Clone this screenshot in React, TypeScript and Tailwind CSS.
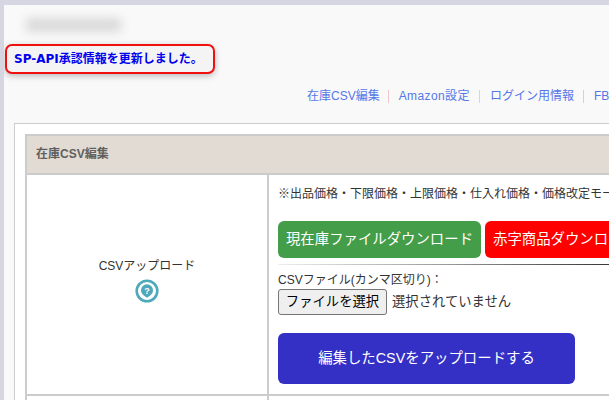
const sans = "font-['Liberation_Sans','Noto_Sans_CJK_JP',sans-serif]"

function HelpIcon() {
  return (
    <svg width="24" height="24" viewBox="0 0 24 24" className="mt-[4px]">
      <circle cx="12" cy="12" r="10.3" fill="#fff" stroke="#4fa9bb" strokeWidth="2.6" />
      <path d="M12 5.2a6 6 0 0 1 6 6c0 3.6-3 5.4-6 7.6-3-2.2-6-4-6-7.6a6 6 0 0 1 6-6z" fill="#4fa9bb" />
      <text x="12" y="14.5" textAnchor="middle" fontSize="9" fontWeight="700" fill="#fff" fontFamily="Liberation Sans">?</text>
    </svg>
  )
}

function Nav() {
  return (
    <div className="mt-[13px] flex h-[18px] items-center whitespace-nowrap pl-[303px] text-[12px] leading-[18px] text-[#5577e8]">
      <span>在庫CSV編集</span>
      <span className="ml-[8px] mr-[10px] h-[13px] w-px shrink-0 bg-[#f3c6cd]" />
      <span className="tracking-[0.4px]">Amazon設定</span>
      <span className="ml-[9px] mr-[10px] h-[13px] w-px shrink-0 bg-[#c6daf2]" />
      <span>ログイン用情報</span>
      <span className="ml-[9px] mr-[10px] h-[13px] w-px shrink-0 bg-[#c6d2ee]" />
      <span>FBA設定</span>
    </div>
  )
}

export default function App() {
  return (
    <div className={`h-[400px] w-[609px] overflow-hidden bg-[#d6d6e2] pl-1 pt-[5px] ${sans}`}>
      <div className="h-[395px] w-[605px] overflow-hidden bg-[#f9f9f9]">
        <div className="h-[39px] pl-[22px] pt-[13px]">
          <div className="h-[14px] w-[95px] bg-[#dadada] blur-[5px]" />
        </div>
        <div className="ml-px flex h-[30px] w-[210px] items-center whitespace-nowrap rounded-[7px] border-2 border-[#f01010] bg-[#f4f4f4] pl-[7px] font-['DejaVu_Sans','Noto_Sans_CJK_JP',sans-serif] text-[12px] font-bold text-[#0000ee] shadow-[0_2px_6px_rgba(0,0,0,0.25)]">
          SP-API承認情報を更新しました。
        </div>
        <Nav />
        <div className="ml-[10px] mt-[18px] h-[300px] w-[640px] border border-[#cccccc] bg-white pl-[10px] pt-[10px]">
          <div className="w-[620px] border-2 border-[#cccccc]">
            <div className="flex h-[39px] items-center border-b-2 border-[#cccccc] bg-[#e2dbd4] pb-[2px] pl-[9px] text-[12px] font-bold text-[#5f5f5f]">
              在庫CSV編集
            </div>
            <div className="flex border-b-2 border-[#cccccc]">
              <div className="flex h-[219px] w-[242px] shrink-0 flex-col items-center border-r-2 border-[#cccccc] pt-[82px] text-[12px] leading-[18px] text-[#333333]">
                <span>CSVアップロード</span>
                <HelpIcon />
              </div>
              <div className="min-w-0 flex-1 pl-[9px] pt-[10px] text-[12px] text-[#333333]">
                <p className="whitespace-nowrap leading-[18px]">※出品価格・下限価格・上限価格・仕入れ価格・価格改定モード等を編集できます</p>
                <div className="mt-[18px] flex gap-1">
                  <div className="flex h-[37px] w-[203px] shrink-0 items-center justify-center whitespace-nowrap rounded-[6px] bg-[#449d48] text-[14.4px] text-white">現在庫ファイルダウンロード</div>
                  <div className="flex h-[37px] w-[180px] shrink-0 items-center whitespace-nowrap rounded-[6px] bg-[#ff0000] pl-2 text-[14.4px] text-white">赤字商品ダウンロード</div>
                </div>
                <div className="mt-[6px] h-px w-[340px] bg-gradient-to-r from-[#eeeeee] via-[#999999] to-[#333333]" />
                <p className="mt-[7px] whitespace-nowrap leading-[17px]">CSVファイル(カンマ区切り)：</p>
                <div className="flex items-center">
                  <div className="flex h-[26px] w-[109px] shrink-0 items-center justify-center whitespace-nowrap rounded-[3px] border border-[#767676] bg-[#efefef] text-[13.33px] text-black">ファイルを選択</div>
                  <span className="ml-[5px] whitespace-nowrap text-[13.33px]">選択されていません</span>
                </div>
                <div className="mt-[18px] flex h-[51px] w-[297px] items-center justify-center whitespace-nowrap rounded-[6px] bg-[#3430c6] text-[14.4px] text-white">編集したCSVをアップロードする</div>
              </div>
            </div>
            <div className="h-[40px] w-[242px] border-r-2 border-[#cccccc]" />
          </div>
        </div>
      </div>
    </div>
  )
}
